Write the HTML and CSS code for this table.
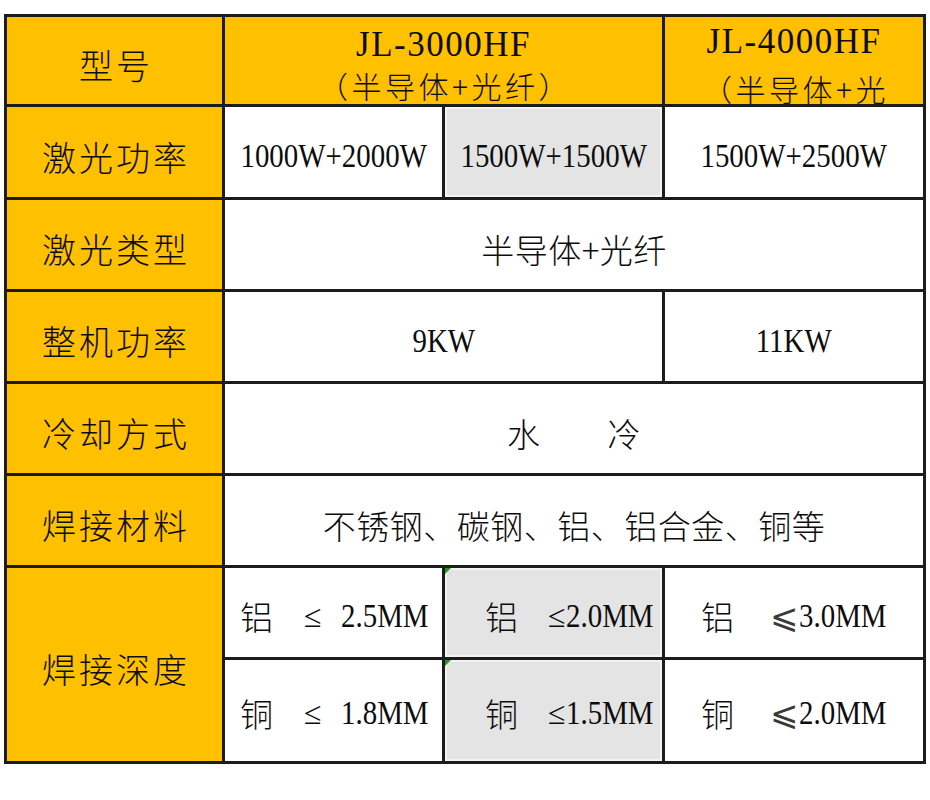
FILE: index.html
```html
<!DOCTYPE html>
<html lang="zh">
<head>
<meta charset="utf-8">
<title>参数表</title>
<link rel="stylesheet" href="styles.css">
</head>
<body>
<div class="spec">
  <div class="cell label">型号</div>
  <div class="cell head span2"><span class="h1">JL-3000HF</span><span class="h2">（半导体+光纤）</span></div>
  <div class="cell head"><span class="h1">JL-4000HF</span><span class="h2 low">（半导体+光</span></div>

  <div class="cell label">激光功率</div>
  <div class="cell"><span class="num">1000W+2000W</span></div>
  <div class="cell gray"><span class="num">1500W+1500W</span></div>
  <div class="cell"><span class="num">1500W+2500W</span></div>

  <div class="cell label">激光类型</div>
  <div class="cell span3"><span class="cjk">半导体+光纤</span></div>

  <div class="cell label">整机功率</div>
  <div class="cell span2"><span class="num">9KW</span></div>
  <div class="cell"><span class="num">11KW</span></div>

  <div class="cell label">冷却方式</div>
  <div class="cell span3"><span class="cjk">水　　冷</span></div>

  <div class="cell label">焊接材料</div>
  <div class="cell span3"><span class="cjk">不锈钢、碳钢、铝、铝合金、铜等</span></div>

  <div class="cell label rspan2">焊接深度</div>
  <div class="cell depth c2"><span class="metal">铝</span><span class="le">≤</span><span class="num">2.5MM</span></div>
  <div class="cell depth c3 gray mark"><span class="metal">铝</span><span class="le">≤</span><span class="num">2.0MM</span></div>
  <div class="cell depth c4"><span class="metal">铝</span><span class="le wide">⩽</span><span class="num">3.0MM</span></div>

  <div class="cell depth c2 last"><span class="metal">铜</span><span class="le">≤</span><span class="num">1.8MM</span></div>
  <div class="cell depth c3 gray mark last"><span class="metal">铜</span><span class="le">≤</span><span class="num">1.5MM</span></div>
  <div class="cell depth c4 last"><span class="metal">铜</span><span class="le wide">⩽</span><span class="num">2.0MM</span></div>
</div>
</body>
</html>
```

FILE: styles.css
```css
* { box-sizing: border-box; }

body {
  margin: 0;
  background: #ffffff;
  color: #0d0d0d;
  font-family: "Noto Sans CJK SC", "Liberation Sans", sans-serif;
}

.spec {
  display: grid;
  grid-template-columns: 215px 217px 217px 258px;
  grid-template-rows: 87px 90px 89px 89px 89px 89px 89px 101px;
  gap: 3px;
  padding: 3px;
  width: 922px;
  margin: 14px 0 0 4px;
  background: #1c1c1c;
}

.cell {
  position: relative;
  display: flex;
  align-items: center;
  justify-content: center;
  padding-top: 8px;
  background: #ffffff;
  white-space: nowrap;
}

.span2 { grid-column: span 2; }
.span3 { grid-column: span 3; }
.rspan2 { grid-row: span 2; }

.label {
  background: #ffc000;
  font-size: 34px;
  font-weight: 300;
  letter-spacing: 3px;
  padding-left: 3px;
}

.head {
  background: #ffc000;
  flex-direction: column;
  padding-top: 4px;
}

.h1 {
  display: block;
  font-family: "Liberation Serif", serif;
  font-size: 35px;
  letter-spacing: 1.5px;
  line-height: 38px;
}

.h2 {
  display: block;
  font-size: 30px;
  font-weight: 300;
  letter-spacing: 3.5px;
  line-height: 30px;
  margin-top: 6px;
  padding-left: 3px;
}

.h2.low { margin-top: 12px; }

.gray {
  background: #e4e4e4;
  box-shadow: inset 0 0 0 2px #f3f3f3;
}

.num {
  display: inline-block;
  font-family: "Liberation Serif", serif;
  font-size: 34px;
  line-height: 1;
  transform: scaleX(0.85);
}

.cjk {
  font-size: 33px;
  font-weight: 300;
  letter-spacing: 0.5px;
}

.depth {
  justify-content: flex-start;
  padding-top: 6px;
}

.depth.last { padding-top: 5px; }

.depth .num { transform-origin: left center; }

.metal {
  font-size: 33px;
  font-weight: 300;
  width: 33px;
}

.le {
  font-family: "Liberation Serif", serif;
  font-size: 32px;
  line-height: 1;
}

.le.wide {
  font-family: "DejaVu Sans", sans-serif;
  font-size: 34px;
  font-weight: 200;
  color: #3a3a3a;
}

.c2 { padding-left: 15px; }
.c2 .le { margin-left: 31px; }
.c2 .num { margin-left: 19px; }

.c3 { padding-left: 40px; }
.c3 .le { margin-left: 30px; }
.c3 .num { margin-left: 0; }

.c4 { padding-left: 36px; }
.c4 .le { margin-left: 36px; }
.c4 .num { margin-left: 1px; }

.mark::before {
  content: "";
  position: absolute;
  top: 0;
  left: 0;
  border-style: solid;
  border-width: 6px 6px 0 0;
  border-color: #1b9a1b transparent transparent transparent;
}
```
